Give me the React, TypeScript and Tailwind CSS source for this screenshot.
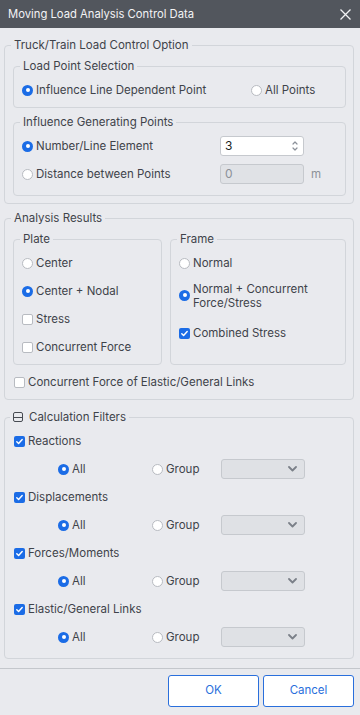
import React from 'react';

const Radio = ({ checked }: { checked?: boolean }) =>
  checked ? (
    <span className="flex h-[11px] w-[11px] shrink-0 items-center justify-center rounded-full bg-[#1b6ce6]">
      <span className="h-[4px] w-[4px] rounded-full bg-white" />
    </span>
  ) : (
    <span className="h-[11px] w-[11px] shrink-0 rounded-full border border-[#b8bbc1] bg-white" />
  );

const Check = ({ checked }: { checked?: boolean }) =>
  checked ? (
    <span className="flex h-[11px] w-[11px] shrink-0 items-center justify-center rounded-[2px] bg-[#1b6ce6]">
      <svg width="9" height="9" viewBox="0 0 10 10" fill="none">
        <path d="M2 5.2l2 2 4-4.4" stroke="white" strokeWidth="1.6" strokeLinecap="round" strokeLinejoin="round" />
      </svg>
    </span>
  ) : (
    <span className="h-[11px] w-[11px] shrink-0 rounded-[2px] border border-[#b8bbc1] bg-white" />
  );

const Option = ({ kind, checked, label, className = '' }: { kind: 'radio' | 'check'; checked?: boolean; label: React.ReactNode; className?: string }) => (
  <div className={`flex h-[28px] items-center gap-[3px] ${className}`}>
    {kind === 'radio' ? <Radio checked={checked} /> : <Check checked={checked} />}
    <span className="pt-[2px]">{label}</span>
  </div>
);

const Legend = ({ children }: { children: React.ReactNode }) => (
  <legend className="-ml-[2px] px-[3px] leading-[16px]">{children}</legend>
);

const Dropdown = () => (
  <div className="flex h-[20px] w-[84px] items-center justify-end rounded-[3px] border border-[#c6c9ce] bg-[#dfe1e5] pr-[7px]">
    <svg width="9" height="6" viewBox="0 0 9 6" fill="none">
      <path d="M1 1l3.5 3.5L8 1" stroke="#7b8089" strokeWidth="1.8" strokeLinecap="round" strokeLinejoin="round" />
    </svg>
  </div>
);

const filters = ['Reactions', 'Displacements', 'Forces/Moments', 'Elastic/General Links'];

export default function App() {
  return (
    <div className="flex h-[715px] w-[360px] flex-col bg-[#e9eaee] font-['Inter',sans-serif] text-[11.5px] text-[#3f434a]">
      {/* Title bar */}
      <div className="flex h-[28px] shrink-0 items-center justify-between bg-[#52565d] pl-2 pr-[9px] text-[11.25px] text-[#f2f3f5]">
        <span>Moving Load Analysis Control Data</span>
        <svg width="11" height="11" viewBox="0 0 11 11" fill="none">
          <path d="M0.5 0.5l10 10M10.5 0.5l-10 10" stroke="#f2f3f5" strokeWidth="1.3" />
        </svg>
      </div>

      <div className="pl-1 pr-[6px] pt-[9px]">
        {/* Truck/Train */}
        <fieldset className="rounded-[4px] border border-[#d2d5da] pb-[7px] pl-2 pr-[7px] pt-[5px]">
          <Legend>Truck/Train Load Control Option</Legend>
          <fieldset className="rounded-[4px] border border-[#d2d5da] pb-[3px] pl-2 pr-2 pt-[2px]">
            <Legend>Load Point Selection</Legend>
            <div className="flex">
              <Option kind="radio" checked label="Influence Line Dependent Point" className="w-[229px]" />
              <Option kind="radio" label="All Points" />
            </div>
          </fieldset>
          <fieldset className="mt-[6px] rounded-[4px] border border-[#d2d5da] pb-[7px] pl-2 pr-2 pt-[2px]">
            <Legend>Influence Generating Points</Legend>
            <div className="flex h-[28px] items-center">
              <Option kind="radio" checked label="Number/Line Element" className="w-[198px]" />
              <div className="flex h-[20px] w-[84px] items-center justify-between rounded-[3px] border border-[#c6c9ce] bg-white pl-[4px] pr-[5px] text-[12px] text-[#1d1f23]">
                <span>3</span>
                <svg width="6" height="12" viewBox="0 0 6 12" fill="none">
                  <path d="M1 4l2-2 2 2M1 8l2 2 2-2" stroke="#8b9099" strokeWidth="1.2" strokeLinecap="round" strokeLinejoin="round" />
                </svg>
              </div>
            </div>
            <div className="flex h-[28px] items-center">
              <Option kind="radio" label="Distance between Points" className="w-[198px]" />
              <div className="flex h-[20px] w-[84px] items-center rounded-[3px] border border-[#c6c9ce] bg-[#e0e2e6] pl-[4px] text-[12px] text-[#8c9198]">
                0
              </div>
              <span className="ml-[7px] pt-[2px] text-[#8c9198]">m</span>
            </div>
          </fieldset>
        </fieldset>

        {/* Analysis Results */}
        <fieldset className="mt-[6px] rounded-[4px] border border-[#d2d5da] pb-[3px] pl-2 pr-[7px] pt-[5px]">
          <Legend>Analysis Results</Legend>
          <div className="grid grid-cols-[149px_176px] gap-2">
            <fieldset className="rounded-[4px] border border-[#d2d5da] pb-[3px] pl-2 pr-2 pt-[2px]">
              <Legend>Plate</Legend>
              <Option kind="radio" label="Center" />
              <Option kind="radio" checked label="Center + Nodal" />
              <Option kind="check" label="Stress" />
              <Option kind="check" label="Concurrent Force" />
            </fieldset>
            <fieldset className="rounded-[4px] border border-[#d2d5da] pb-[3px] pl-2 pr-2 pt-[2px]">
              <Legend>Frame</Legend>
              <Option kind="radio" label="Normal" />
              <Option
                kind="radio"
                checked
                className="mt-[4px] leading-[14px]"
                label={
                  <>
                    Normal + Concurrent
                    <br />
                    Force/Stress
                  </>
                }
              />
              <Option kind="check" checked label="Combined Stress" className="mt-[10px]" />
            </fieldset>
          </div>
          <Option kind="check" label="Concurrent Force of Elastic/General Links" className="mt-[3px] pl-[1px]" />
        </fieldset>

        {/* Calculation Filters */}
        <fieldset className="mt-[9px] rounded-[4px] border border-[#d2d5da] pb-[7px] pl-2 pr-[7px] pt-[2px]">
          <legend className="-ml-[3px] flex items-center gap-[6px] px-[3px] leading-[16px]">
            <span className="relative h-[10px] w-[10px] rounded-[2px] border border-[#474b52]">
              <span className="absolute left-0 right-0 top-[3.5px] h-px bg-[#474b52]" />
            </span>
            Calculation Filters
          </legend>
          {filters.map((f) => (
            <div key={f}>
              <Option kind="check" checked label={f} className="pl-[1px]" />
              <div className="flex h-[28px] items-center pl-[45px]">
                <Option kind="radio" checked label="All" className="w-[94px]" />
                <Option kind="radio" label="Group" className="w-[69px]" />
                <Dropdown />
              </div>
            </div>
          ))}
        </fieldset>
      </div>

      {/* Footer */}
      <div className="mt-[9px] flex justify-end gap-1 border-t border-[#c4c7cc] pr-[6px] pt-[6px]">
        <button className="h-[32px] w-[91px] rounded-[3px] border border-[#2a6fdc] bg-white text-[#2a6fdc]">OK</button>
        <button className="h-[32px] w-[91px] rounded-[3px] border border-[#2a6fdc] bg-white text-[#2a6fdc]">Cancel</button>
      </div>
    </div>
  );
}
